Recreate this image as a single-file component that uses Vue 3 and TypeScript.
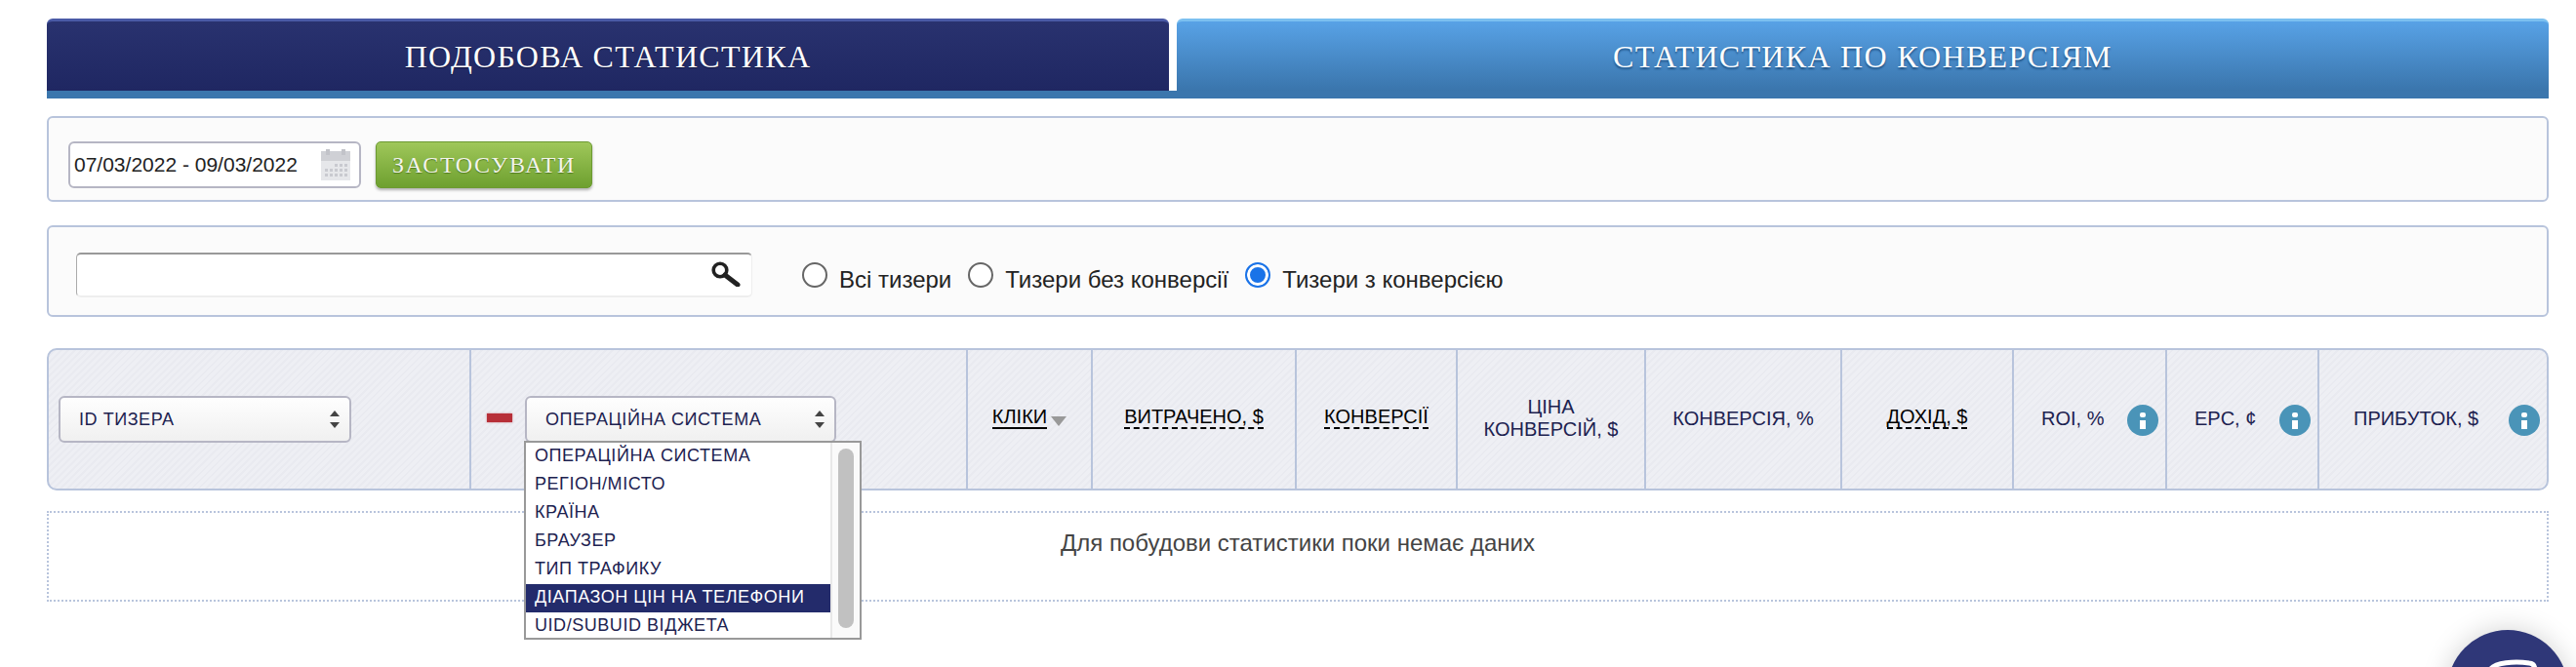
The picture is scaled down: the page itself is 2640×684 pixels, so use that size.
<script setup lang="ts">
const options = ['ОПЕРАЦІЙНА СИСТЕМА', 'РЕГІОН/МІСТО', 'КРАЇНА', 'БРАУЗЕР', 'ТИП ТРАФИКУ', 'ДІАПАЗОН ЦІН НА ТЕЛЕФОНИ', 'UID/SUBUID ВІДЖЕТА']
</script>

<template>
  <div class="page">
    <div class="tabs">
      <div class="tab tab-active">ПОДОБОВА СТАТИСТИКА</div>
      <div class="tab tab-idle">СТАТИСТИКА ПО КОНВЕРСІЯМ</div>
    </div>

    <div class="panel panel-date">
      <div class="date-input">
        <span class="date-text">07/03/2022 - 09/03/2022</span>
        <svg class="cal" width="30" height="32" viewBox="0 0 30 32">
          <rect x="0" y="2" width="30" height="30" fill="#e6e7ea" />
          <rect x="0" y="2" width="30" height="10" fill="#cfd0d5" />
          <rect x="5" y="0" width="4" height="6" fill="#c2c3c9" />
          <rect x="21" y="0" width="4" height="6" fill="#c2c3c9" />
          <g fill="#c9cad0">
            <rect x="14" y="15" width="3" height="3" /><rect x="19" y="15" width="3" height="3" /><rect x="24" y="15" width="3" height="3" />
            <rect x="4" y="20" width="3" height="3" /><rect x="9" y="20" width="3" height="3" /><rect x="14" y="20" width="3" height="3" /><rect x="19" y="20" width="3" height="3" /><rect x="24" y="20" width="3" height="3" />
            <rect x="4" y="25" width="3" height="3" /><rect x="9" y="25" width="3" height="3" /><rect x="14" y="25" width="3" height="3" /><rect x="19" y="25" width="3" height="3" /><rect x="24" y="25" width="3" height="3" />
          </g>
        </svg>
      </div>
      <div class="apply">ЗАСТОСУВАТИ</div>
    </div>

    <div class="panel panel-search">
      <div class="search">
        <svg class="loupe" width="32" height="26" viewBox="0 0 32 26">
          <circle cx="10" cy="9" r="6.8" fill="none" stroke="#222" stroke-width="3.6" />
          <line x1="15" y1="14" x2="28" y2="24" stroke="#222" stroke-width="5" stroke-linecap="round" />
        </svg>
      </div>
      <label class="radio"><span class="dot"></span><span class="txt">Всі тизери</span></label>
      <label class="radio"><span class="dot"></span><span class="txt">Тизери без конверсії</span></label>
      <label class="radio"><span class="dot dot-on"></span><span class="txt">Тизери з конверсією</span></label>
    </div>

    <div class="table-head">
      <div class="cell cell-sel1">
        <div class="select select-a">
          <span>ID ТИЗЕРА</span>
          <span class="arrows"></span>
        </div>
      </div>
      <div class="cell cell-sel2">
        <span class="minus"></span>
        <div class="sel-wrap">
          <div class="select select-b">
            <span>ОПЕРАЦІЙНА СИСТЕМА</span>
            <span class="arrows"></span>
          </div>
          <div class="drop">
            <div class="drop-list">
              <div v-for="(o, i) in options" :key="o" class="opt" :class="{ 'opt-on': i === 5 }">{{ o }}</div>
            </div>
            <div class="track"><div class="thumb"></div></div>
          </div>
        </div>
      </div>
      <div class="cell c3 center"><span class="link solid">КЛІКИ</span><span class="tri"></span></div>
      <div class="cell c4 center"><span class="link">ВИТРАЧЕНО, $</span></div>
      <div class="cell c5 center"><span class="link">КОНВЕРСІЇ</span></div>
      <div class="cell c6 center"><span class="plain">ЦІНА<br />КОНВЕРСІЙ, $</span></div>
      <div class="cell c7 center"><span class="plain">КОНВЕРСІЯ, %</span></div>
      <div class="cell c8 center"><span class="link">ДОХІД, $</span></div>
      <div class="cell c9 info-cell"><span class="plain">ROI, %</span><span class="info"><i></i><b></b></span></div>
      <div class="cell c10 info-cell"><span class="plain">EPC, ¢</span><span class="info"><i></i><b></b></span></div>
      <div class="cell c11 info-cell last"><span class="plain">ПРИБУТОК, $</span><span class="info"><i></i><b></b></span></div>
    </div>

    <div class="empty">Для побудови статистики поки немає даних</div>

    <div class="chat">
      <svg width="124" height="124" viewBox="0 0 124 124">
        <path d="M44 41 C48 33 70 32 84 34 C88 34 90 37 90 42" fill="none" stroke="#fff" stroke-width="5" stroke-linecap="round" />
      </svg>
    </div>
  </div>
</template>

<style>
html, body { margin: 0; background: #fff; overflow: hidden; }
</style>

<style scoped>
.page {
  position: relative;
  overflow: hidden;
  box-sizing: border-box;
  width: 2640px;
  height: 684px;
  padding: 19px 28px 0 48px;
  font-family: "Liberation Sans", Arial, sans-serif;
  color: #1d2250;
}
.tabs {
  display: flex;
  gap: 8px;
  height: 82px;
  box-sizing: border-box;
  border-bottom: 8px solid #3b76ad;
}
.tab {
  display: flex;
  align-items: center;
  justify-content: center;
  box-sizing: border-box;
  height: 74px;
  padding-top: 2px;
  border-radius: 6px 6px 0 0;
  color: #fff;
  font-family: "Liberation Serif", "Times New Roman", serif;
  font-size: 32px;
  letter-spacing: 1.3px;
  white-space: nowrap;
}
.tab-active {
  width: 1150px;
  border-top: 3px solid #4a5aa6;
  background: linear-gradient(#29326f, #1f2762);
  text-shadow: 0 1px 1px #14183f;
}
.tab-idle {
  flex: 1;
  border-top: 3px solid #7cc0f0;
  background: linear-gradient(#58a2e6, #3a75ac);
  text-shadow: 0 2px 2px #1f4f80;
}
.panel {
  box-sizing: border-box;
  display: flex;
  background: #fbfbfb;
  border: 2px solid #b8c4dc;
  border-radius: 6px;
}
.panel-date {
  height: 88px;
  margin-top: 18px;
  padding: 24px 0 0 20px;
  align-items: flex-start;
  gap: 15px;
}
.date-input {
  box-sizing: border-box;
  width: 300px;
  height: 48px;
  display: flex;
  align-items: center;
  justify-content: space-between;
  padding: 0 9px 0 4px;
  background: #fff;
  border: 2px solid #b6b6c4;
  border-radius: 6px;
  color: #222;
  font-size: 21px;
}
.date-text { white-space: nowrap; }
.apply {
  box-sizing: border-box;
  width: 222px;
  height: 48px;
  display: flex;
  align-items: center;
  justify-content: center;
  border: 1px solid #6c9a32;
  border-radius: 5px;
  background: linear-gradient(#9fc75a, #6ea02f);
  box-shadow: 0 2px 3px rgba(0, 0, 0, 0.3);
  color: #f4f4ec;
  font-family: "Liberation Serif", "Times New Roman", serif;
  font-size: 24px;
  letter-spacing: 1.6px;
  text-shadow: 0 1px 1px #4f7a1d;
}
.panel-search {
  height: 94px;
  margin-top: 24px;
  padding: 8px 0 0 28px;
  align-items: center;
}
.search {
  box-sizing: border-box;
  position: relative;
  width: 693px;
  height: 46px;
  margin-right: 51px;
  background: #fff;
  border-top: 2px solid #999;
  border-left: 1px solid #aaa;
  border-right: 1px solid #eee;
  border-bottom: 2px solid #eee;
  border-radius: 5px;
}
.loupe {
  position: absolute;
  right: 10px;
  top: 7px;
}
.radio {
  display: flex;
  align-items: center;
  color: #222;
  font-size: 24px;
  margin-right: 17px;
}
.txt { padding-top: 9px; }
.dot {
  box-sizing: border-box;
  width: 26px;
  height: 26px;
  margin-right: 12px;
  border: 2px solid #666;
  border-radius: 50%;
  background: #fff;
}
.dot-on {
  border: 2px solid #1a73e8;
  background: #1a73e8;
  box-shadow: inset 0 0 0 3px #fff;
}
.table-head {
  box-sizing: border-box;
  display: flex;
  height: 146px;
  margin-top: 32px;
  border: 2px solid #b8c4dc;
  border-radius: 10px;
  background: repeating-linear-gradient(135deg, #eeeff4 0, #eeeff4 3px, #e9eaf0 3px, #e9eaf0 5px);
}
.cell {
  box-sizing: border-box;
  flex: none;
  display: flex;
  align-items: center;
  height: 100%;
  border-right: 2px solid #b8c4dc;
  font-size: 20px;
}
.last { border-right: 0; flex: 1; }
.center { justify-content: center; }
.cell-sel1 { width: 433px; padding-left: 10px; }
.cell-sel2 { width: 509px; padding-left: 16px; }
.c3 { width: 128px; }
.c4 { width: 209px; }
.c5 { width: 165px; }
.c6 { width: 193px; }
.c7 { width: 201px; }
.c8 { width: 176px; }
.c9 { width: 157px; }
.c10 { width: 156px; }
.select {
  box-sizing: border-box;
  height: 48px;
  display: flex;
  align-items: center;
  justify-content: space-between;
  padding: 0 10px 0 19px;
  border: 2px solid #b6b6c4;
  border-radius: 6px;
  background: linear-gradient(#fefefe, #f0f0f0);
  font-size: 18px;
  letter-spacing: 0.55px;
  white-space: nowrap;
}
.select-a { width: 300px; }
.select-b { width: 319px; }
.arrows {
  display: block;
  position: relative;
  width: 10px;
  height: 18px;
}
.arrows::before, .arrows::after {
  content: "";
  position: absolute;
  left: 0;
  border-left: 5px solid transparent;
  border-right: 5px solid transparent;
}
.arrows::before { top: 0; border-bottom: 6px solid #444; }
.arrows::after { bottom: 0; border-top: 6px solid #444; }
.minus {
  flex: none;
  width: 26px;
  height: 9px;
  margin: -3px 13px 0 0;
  background: #b72f38;
  box-shadow: 0 0 2px rgba(183, 47, 56, 0.6);
}
.sel-wrap { position: relative; }
.drop {
  position: absolute;
  z-index: 2;
  box-sizing: border-box;
  left: -1px;
  top: 46px;
  width: 346px;
  height: 204px;
  display: flex;
  background: #fff;
  border: 2px solid #999;
  overflow: hidden;
}
.drop-list { width: 312px; }
.opt {
  box-sizing: border-box;
  height: 29px;
  line-height: 27px;
  padding-left: 9px;
  font-size: 18px;
  letter-spacing: 0.55px;
  white-space: nowrap;
}
.opt-on { background: #232b6b; color: #fff; }
.track {
  flex: 1;
  border-left: 2px solid #e8e8e8;
  background: #fafafa;
  padding: 6px 6px 0 6px;
}
.thumb {
  width: 16px;
  height: 184px;
  border-radius: 8px;
  background: #c1c1c1;
}
.link {
  color: #000;
  border-bottom: 2px dashed #000;
  line-height: 22px;
  margin-top: -5px;
  white-space: nowrap;
}
.solid { border-bottom-style: solid; }
.tri {
  width: 0;
  height: 0;
  margin: 0 0 -4px 4px;
  border-left: 8px solid transparent;
  border-right: 8px solid transparent;
  border-top: 10px solid #999;
}
.plain { margin-top: -2px; line-height: 23px; white-space: nowrap; text-align: center; }
.info-cell { position: relative; justify-content: flex-start; }
.c9 .plain { margin-left: 28px; }
.c10 .plain { margin-left: 28px; }
.c11 .plain { margin-left: 35px; }
.info {
  position: absolute;
  right: 7px;
  top: 56px;
  width: 32px;
  height: 32px;
  border-radius: 50%;
  background: #4a94b8;
}
.info i {
  position: absolute;
  left: 13px;
  top: 8px;
  width: 6px;
  height: 5px;
  border-radius: 2px;
  background: #fff;
}
.info b {
  position: absolute;
  left: 13px;
  top: 16px;
  width: 6px;
  height: 9px;
  background: #fff;
}
.empty {
  box-sizing: border-box;
  height: 93px;
  margin-top: 21px;
  padding-top: 17px;
  border: 2px dotted #b8c4dc;
  text-align: center;
  color: #444;
  font-size: 24px;
  line-height: 28px;
}
.chat {
  position: absolute;
  left: 2508px;
  top: 646px;
  width: 124px;
  height: 124px;
  border-radius: 50%;
  background: #2f3778;
  box-shadow: 0 0 28px rgba(0, 0, 0, 0.18);
}
</style>
